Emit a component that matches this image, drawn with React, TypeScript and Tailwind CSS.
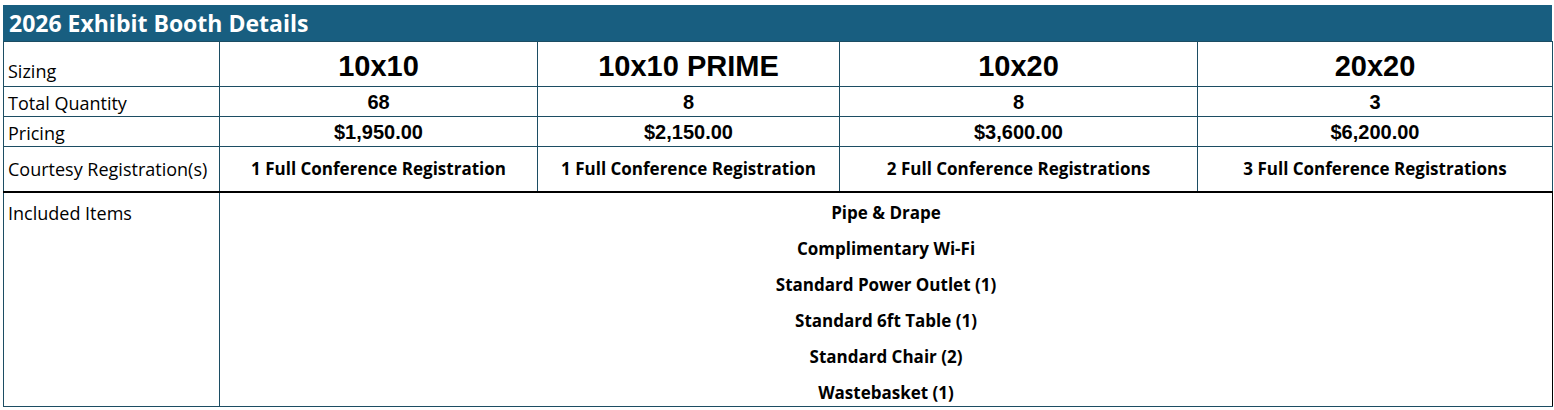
const sizes = [
  { name: "10x10", qty: "68", price: "$1,950.00", reg: "1 Full Conference Registration" },
  { name: "10x10 PRIME", qty: "8", price: "$2,150.00", reg: "1 Full Conference Registration" },
  { name: "10x20", qty: "8", price: "$3,600.00", reg: "2 Full Conference Registrations" },
  { name: "20x20", qty: "3", price: "$6,200.00", reg: "3 Full Conference Registrations" },
];

const items = [
  "Pipe & Drape",
  "Complimentary Wi-Fi",
  "Standard Power Outlet (1)",
  "Standard 6ft Table (1)",
  "Standard Chair (2)",
  "Wastebasket (1)",
];

const aptos = "font-['Open_Sans',sans-serif]";
const arial = "font-['Liberation_Sans',Arial,sans-serif]";
const line = "border border-[#1c4d63]";

export default function App() {
  return (
    <div className="bg-white w-[1554px] h-[410px] pt-[5px] pl-[3px]">
      <div className="w-[1549px]">
        <div className={`bg-[#185e80] h-[36px] flex items-center pl-[6px] text-white text-[23px] font-bold ${aptos}`}>
          2026 Exhibit Booth Details
        </div>
        <table className="table-fixed border-collapse w-[1549px] text-black">
          <colgroup>
            <col className="w-[216px]" />
            <col className="w-[318px]" />
            <col className="w-[302px]" />
            <col className="w-[358px]" />
            <col className="w-[355px]" />
          </colgroup>
          <tbody>
            <tr className="h-[45px]">
              <td className={`${line} ${aptos} text-[18px] align-bottom pb-[3px] pl-[4px] leading-[24px]`}>Sizing</td>
              {sizes.map((s) => (
                <td key={s.name} className={`${line} ${arial} text-[29px] font-bold text-center align-bottom pb-[3px] leading-[34px]`}>
                  {s.name}
                </td>
              ))}
            </tr>
            <tr className="h-[30px]">
              <td className={`${line} ${aptos} text-[18px] align-bottom pb-[1px] pl-[4px] leading-[24px]`}>Total Quantity</td>
              {sizes.map((s) => (
                <td key={s.name} className={`${line} ${arial} text-[20px] font-bold text-center align-bottom pb-[2px] leading-[24px]`}>
                  {s.qty}
                </td>
              ))}
            </tr>
            <tr className="h-[30px]">
              <td className={`${line} ${aptos} text-[18px] align-bottom pb-[1px] pl-[4px] leading-[24px]`}>Pricing</td>
              {sizes.map((s) => (
                <td key={s.name} className={`${line} ${arial} text-[20px] font-bold text-center align-bottom pb-[2px] leading-[24px]`}>
                  {s.price}
                </td>
              ))}
            </tr>
            <tr className="h-[45px] border-b-2 border-b-black">
              <td className={`${line} border-b-black ${aptos} text-[18px] align-middle pl-[4px] leading-[24px]`}>
                Courtesy Registration(s)
              </td>
              {sizes.map((s, i) => (
                <td key={i} className={`${line} border-b-black ${aptos} text-[17px] font-bold text-center align-middle leading-[24px]`}>
                  {s.reg}
                </td>
              ))}
            </tr>
            <tr className="h-[214px]">
              <td className={`${line} ${aptos} text-[18px] align-top pt-[8px] pl-[4px] leading-[24px]`}>Included Items</td>
              <td colSpan={4} className={`${line} border-r-black align-top pt-[9px] pb-[2px]`}>
                <div className={`flex flex-col items-center gap-[14px] ${aptos} text-[17px] font-bold leading-[22px]`}>
                  {items.map((it) => (
                    <div key={it}>{it}</div>
                  ))}
                </div>
              </td>
            </tr>
          </tbody>
        </table>
      </div>
    </div>
  );
}
